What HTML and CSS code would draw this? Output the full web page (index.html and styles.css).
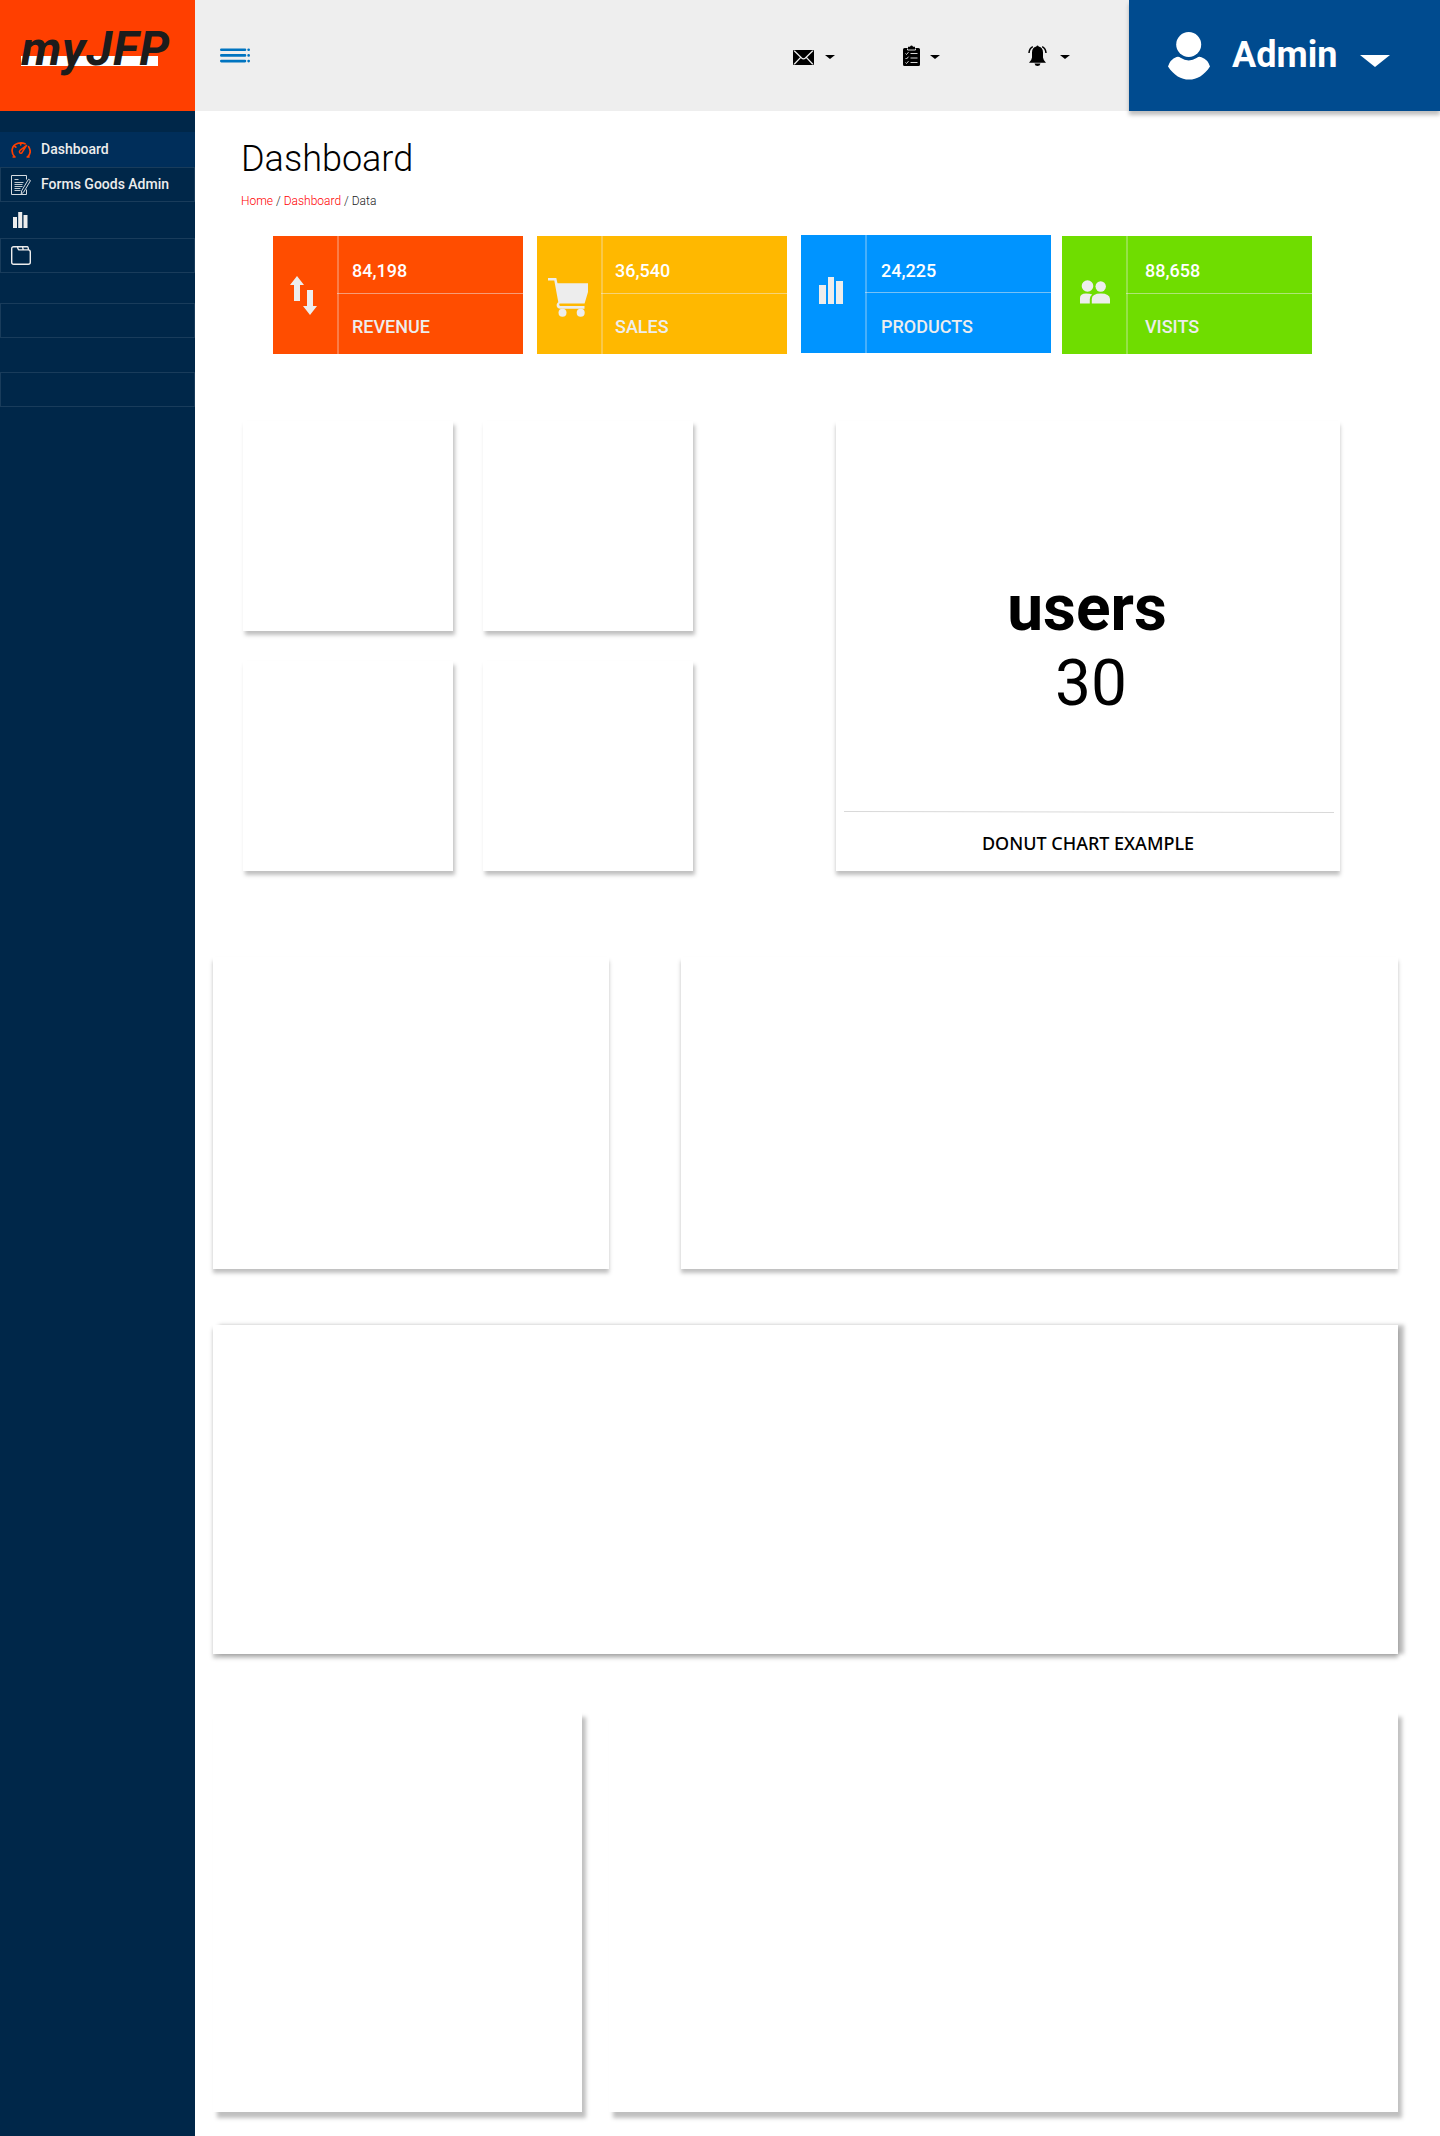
FILE: index.html
```html
<!DOCTYPE html>
<html lang="en">
<head>
<meta charset="utf-8">
<title>myJFP Dashboard</title>
<link rel="stylesheet" href="styles.css">
</head>
<body>
<div class="app">
  <aside class="sidebar">
    <div class="logo"><span class="logo-text">myJFP</span></div>
    <nav class="menu">
      <a class="item item-active">
        <svg width="20" height="16" viewBox="0 0 20 16" fill="none" stroke="#ff3f00" stroke-width="1.7" stroke-linecap="round"><path d="M3.6 14.8C-.6 10 .6 3.400 6.500 1.500M7 1.300C9.500.6 12 .8 14 1.800M17.600 4.600C19.700 8 19.600 12 16.700 14.800M2.300 14.900h1.600M16.300 14.900h1.600M9.700 1.200v1.600M4 4.500l.8.700"/><path d="M15.600 3.400L9 8.400C7.600 9.800 8.800 11.800 10.700 11Z" stroke-width="1.400" stroke-linejoin="round"/></svg>
        <span class="item-text">Dashboard</span>
      </a>
      <a class="item item-boxed">
        <svg width="20" height="20" viewBox="0 0 20 20" fill="none" stroke="#d5dbe0" stroke-width="1"><path d="M15.500 4.500V.5H.5v19h15v-5"/><path d="M3.500 4.500h4M3.500 7.500h9M3.500 9.500h8M3.500 11.500h8M3.500 13.500h6M3.500 15.500h6" stroke-width=".9"/><path d="M17.500 4.300l2 1.300-6.800 11.500-2.500 2 .4-3.200Z"/></svg>
        <span class="item-text">Forms Goods Admin</span>
      </a>
      <a class="item item-chart">
        <svg width="15" height="16" viewBox="0 0 15 16" fill="#ededed"><path d="M0 5h4v11H0zM5.200 0h4v16h-4zM10.500 3h4v13h-4z"/></svg>
      </a>
      <a class="item item-boxed item-last">
        <svg width="20" height="19" viewBox="0 0 20 19" fill="none" stroke="#ededed" stroke-width="1.400"><path d="M2.700.8H16.300Q17.300.8 17.400 3.900Q19.300 4 19.300 6V16.300Q19.300 18.300 17.300 18.300H2.700Q.7 18.300.7 16.300V2.800Q.7.8 2.700.8ZM6.500.8Q7 3.900 8.500 3.900H17.300M11.500.8L12.300 3.900"/></svg>
      </a>
      <a class="item item-boxed item-gap-s"></a>
      <a class="item item-boxed item-gap-l"></a>
    </nav>
  </aside>

  <div class="page">
    <header class="topbar">
      <svg class="toggle" width="30" height="15" viewBox="0 0 30 15" stroke="#0074c0" stroke-width="2.600" stroke-linecap="round"><path d="M1.300 1.700H25M1.300 7.400H25M1.300 13.100H25M28.600 1.700h.1M28.600 7.400h.1M28.600 13.100h.1"/></svg>
      <div class="tools">
        <div class="tool tool-mail">
          <svg class="mail" width="21" height="15" viewBox="0 0 21 15"><rect width="21" height="15" rx="1" fill="#000"/><path d="M1.200.8L8.600 8Q10.500 9.600 12.400 8L19.800.8M1.200 14.200L7.700 7.400M19.800 14.200L13.300 7.400" fill="none" stroke="#eee" stroke-width="1.300"/></svg>
          <svg class="caret" width="10" height="4" viewBox="0 0 10 4"><path d="M0 0h10L5 4z"/></svg>
        </div>
        <div class="tool tool-tasks">
          <svg width="17" height="21" viewBox="0 0 17 21"><path d="M1.500 3H5V1.800H6.900Q8.500-.9 10.100 1.800H12V3h3.500Q17 3 17 4.500V19.500Q17 21 15.500 21h-14Q0 21 0 19.500v-15Q0 3 1.500 3Z"/><path d="M4.500 3.500V5h8V3.500M7.500 8.500h7M7.500 13h7M7.500 17.500h7M2.500 8.500l1 1 2-2.300M2.500 13l1 1 2-2.300M2.500 17.500l1 1 2-2.300" fill="none" stroke="#eee" stroke-width=".9"/></svg>
          <svg class="caret" width="10" height="4" viewBox="0 0 10 4"><path d="M0 0h10L5 4z"/></svg>
        </div>
        <div class="tool tool-alerts">
          <svg width="19" height="21" viewBox="0 0 19 21"><path d="M8.300 1.500Q9.500-.6 10.700 1.500Q15 2.500 15 7.500V12.500Q15.200 15 18 17.700H1Q3.800 15 4 12.500V7.500Q4 2.500 8.300 1.500ZM6.500 18.500h6Q12 21 9.500 21T6.500 18.500Z"/><path d="M4.800 1.600Q1.200 3.500 1 8M14.200 1.600Q17.800 3.500 18 8" fill="none" stroke="#000" stroke-width="1.500"/></svg>
          <svg class="caret" width="10" height="4" viewBox="0 0 10 4"><path d="M0 0h10L5 4z"/></svg>
        </div>
      </div>
      <div class="account">
        <svg width="42" height="48" viewBox="0 0 42 48" fill="#fff"><circle cx="20.700" cy="12.500" r="12.500"/><path d="M8.500 25Q11 24.300 12.500 25.800Q20.700 31 29 25.800Q30.500 24.300 33.500 25.200Q40 27.500 42 34.500C36 43.500 29 47.600 21 47.600S6 43.500 0 34.500Q2 27.500 8.500 25Z"/></svg>
        <span class="account-name">Admin</span>
        <svg class="account-caret" width="30" height="12" viewBox="0 0 30 12" fill="#fff"><path d="M0 0h30L15 12z"/></svg>
      </div>
    </header>

    <main class="content">
      <h1 class="title">Dashboard</h1>
      <div class="crumbs"><a>Home</a> / <a>Dashboard</a> / <span>Data</span></div>

      <section class="stats">
        <article class="stat stat-revenue">
          <div class="stat-icon"><svg width="27" height="39" viewBox="0 0 27 39" fill="#ededed"><path d="M7 0l7 9H10v16H4V9H0zM20 39l-7-9h4V14h6v16h4z"/></svg></div>
          <div class="stat-value">84,198</div><div class="stat-label">REVENUE</div>
        </article>
        <article class="stat stat-sales">
          <div class="stat-icon"><svg width="40" height="39" viewBox="0 0 40 39" fill="#ededed"><path d="M0 0H8.300L9.500 5.200H40V14L36.600 25.500H11.500Q10.500 27 12 28H36.500V30.700H12.500C8.300 30.700 7.500 26 10.300 24.200L6.300 2.500H0Z"/><circle cx="14.500" cy="34.800" r="4"/><circle cx="32.700" cy="34.800" r="4"/></svg></div>
          <div class="stat-value">36,540</div><div class="stat-label">SALES</div>
        </article>
        <article class="stat stat-products">
          <div class="stat-icon"><svg width="24" height="27" viewBox="0 0 24 27" fill="#ededed"><path d="M0 8h7v19H0zM9 0h6v27H9zM17 4h7v23h-7z"/></svg></div>
          <div class="stat-value">24,225</div><div class="stat-label">PRODUCTS</div>
        </article>
        <article class="stat stat-visits">
          <div class="stat-icon"><svg width="30" height="24" viewBox="0 0 30 24" fill="#ededed"><circle cx="7.500" cy="6" r="5.800"/><circle cx="20.700" cy="6.500" r="5.200"/><path d="M0 23.500V18Q0 13.500 6 13.500Q10 13.500 12.200 14.500Q9.800 16 9.800 19V23.500ZM11.800 23.500V19Q12 13.500 20.800 13.500T30 19V23.500Z"/></svg></div>
          <div class="stat-value">88,658</div><div class="stat-label">VISITS</div>
        </article>
      </section>

      <section class="overview">
        <div class="tiles">
          <div class="tile"></div><div class="tile"></div>
          <div class="tile"></div><div class="tile"></div>
        </div>
        <article class="donut">
          <div class="donut-body">
            <div class="donut-name">users</div>
            <div class="donut-count">30</div>
          </div>
          <svg class="donut-rule" width="490" height="2" viewBox="0 0 490 2"><path d="M0 .5L490 1.500" stroke="#d9d9d9"/></svg>
          <div class="donut-caption">DONUT CHART EXAMPLE</div>
        </article>
      </section>

      <section class="row row-mid"><div class="panel"></div><div class="panel"></div></section>
      <section class="wide"></section>
      <section class="row row-end"><div class="panel"></div><div class="panel"></div></section>
    </main>
  </div>
</div>
</body>
</html>
```
FILE: styles.css
```css
* { box-sizing: border-box; }
body { margin: 0; background: #fff; font-family: Roboto, sans-serif; color: #000; }
svg { display: block; flex: none; }
.app { display: flex; width: 1440px; height: 2136px; overflow: hidden; }

.sidebar { width: 195px; flex: none; background: #002749; }
.logo { height: 111px; padding: 21px 0 0 21px; background: #ff3f00; }
.logo-text {
  display: block; width: 137px; height: 56px; line-height: 56px;
  font-size: 48px; font-weight: 700; font-style: italic; letter-spacing: .7px; color: #1c1c1c; white-space: nowrap;
  background: linear-gradient(#fff, #fff) 0 35px / 137px 10px no-repeat;
}
.menu { padding-top: 21px; }
.item {
  display: flex; align-items: center; gap: 10px; height: 35px; padding-left: 11px;
  font-size: 14px; font-weight: 500; color: #ededed; white-space: nowrap;
}
.item-text { padding-bottom: 2px; }
.item-active { background: #002e5a; }
.item-boxed { border: 1px solid #193c5b; padding-left: 10px; }
.item-chart { height: 36px; padding-left: 13px; }
.item-last { padding-bottom: 1px; }
.item-gap-s { margin-top: 30px; }
.item-gap-l { margin-top: 34px; }

.page { flex: 1; min-width: 0; }
.topbar { display: flex; align-items: center; height: 111px; background: #eee; }
.toggle { margin-left: 25px; }
.tools { display: flex; align-items: center; flex: 1; padding-left: 543px; }
.tool { display: flex; align-items: center; gap: 11px; }
.mail { margin-top: 4px; }
.tool-mail { width: 110px; }
.caret { margin-top: 3px; }
.tool-tasks { width: 125px; }
.tool-tasks .caret { margin-left: -1px; }
.tool-alerts { gap: 13px; }
.account {
  display: flex; align-items: center; width: 311px; height: 111px; padding-left: 39px;
  background: #004b8f; color: #fff; box-shadow: 0 4px 4px rgba(0, 0, 0, .25);
}
.account-name { width: 128px; margin-left: 22px; padding-bottom: 2px; font-size: 36px; font-weight: 700; }
.account-caret { margin-top: 11px; }

.content { padding: 27px 0 0; }
.title { margin: 0 0 0 46px; font-size: 36px; line-height: 42px; font-weight: 300; }
.crumbs { margin: 14px 0 0 46px; font-size: 12px; line-height: 14px; font-weight: 300; color: #222; }
.crumbs a { color: #f00; }

.stats { display: flex; gap: 14px; margin: 28px 0 0 78px; }
.stat {
  display: grid; grid-template: 58px 60px / 64px 186px; width: 250px; height: 118px;
  color: #fff; font-size: 18px; font-weight: 500;
}
.stat-revenue { background: #ff4d00; }
.stat-sales { background: #ffb800; }
.stat-products { background: #0094ff; margin-top: -1px; }
.stat-visits { background: #6fdd00; margin-left: -3px; }
.stat-icon {
  grid-row: 1 / 3; display: flex; align-items: center; justify-content: center;
  width: 66px; border-right: 2px solid rgba(237, 237, 237, .3);
}
.stat-value { padding: 24px 0 0 15px; line-height: 21px; border-bottom: 1px solid rgba(237, 237, 237, .5); }
.stat-label { padding: 22px 0 0 15px; line-height: 21px; color: #ededed; }
.stat-revenue .stat-icon { padding: 1px 4px 0 0; }
.stat-sales .stat-icon { padding: 5px 3px 0 0; }
.stat-sales .stat-value, .stat-sales .stat-label { padding-left: 14px; }
.stat-products .stat-icon { padding: 0 4px 7px 0; }
.stat-products .stat-value { padding: 25px 0 0 16px; }
.stat-products .stat-label { padding: 23px 0 0 16px; }
.stat-visits .stat-icon { padding: 0 0 6px 2px; }
.stat-visits .stat-value, .stat-visits .stat-label { padding-left: 19px; }

.overview { display: flex; margin: 67px 0 0 48px; }
.tiles { display: grid; grid-template-columns: 210px 210px; gap: 30px; }
.tile { height: 210px; background: #fff; box-shadow: 2px 4px 4px rgba(0, 0, 0, .25); }
.donut {
  display: flex; flex-direction: column; width: 504px; height: 450px; margin-left: 143px;
  box-shadow: 0 4px 4px rgba(0, 0, 0, .25);
}
.donut-body { height: 390px; padding-top: 150px; font-size: 64px; line-height: 75px; text-align: center; }
.donut-name { font-weight: 700; padding-right: 2px; }
.donut-count { padding-left: 6px; }
.donut-rule { margin-left: 8px; }
.donut-caption {
  padding-top: 18px; font: 500 18px/25px "Noto Sans", sans-serif; text-align: center;
}

.row { display: flex; margin-left: 18px; }
.row-mid { gap: 72px; margin-top: 86px; }
.row-mid .panel { width: 396px; height: 312px; background: #fff; box-shadow: 0 4px 4px rgba(0, 0, 0, .25); }
.row-mid .panel + .panel { width: 717px; }
.wide {
  width: 1185px; height: 329px; margin: 56px 0 0 18px; background: #fff;
  box-shadow: 0 4px 4px rgba(0, 0, 0, .25), 6px 0 4px rgba(0, 0, 0, .25);
}
.row-end { gap: 27px; margin-top: 57px; }
.row-end .panel { width: 369px; height: 401px; background: #fff; box-shadow: 4px 6px 4px rgba(0, 0, 0, .25); }
.row-end .panel + .panel { width: 789px; }
```
